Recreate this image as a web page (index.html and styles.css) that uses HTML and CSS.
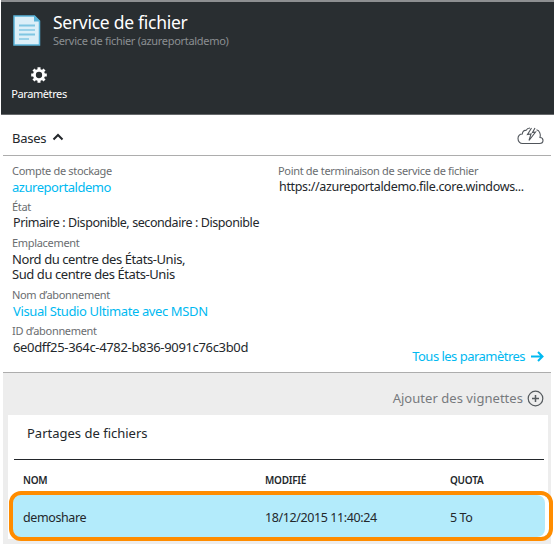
FILE: index.html
```html
<!DOCTYPE html>
<html lang="fr">
<head>
<meta charset="utf-8">
<title>Service de fichier</title>
<link rel="stylesheet" href="styles.css">
</head>
<body>
<main class="blade">
  <header class="header">
    <div class="heading">
      <svg class="doc" width="28" height="32" viewBox="0 0 28 32">
        <path d="M1 1H21.500L26.500 6V30H1Z" fill="#dceff8" stroke="#59b4d9" stroke-width="1.500"/>
        <path d="M21 .5L27 6.500H21Z" fill="#59b4d9"/>
        <path d="M6 10.500H22M6 19.500H22" stroke="#7fc6e2" stroke-width="2"/>
        <path d="M6 15H22M6 24H16" stroke="#59b4d9"/>
      </svg>
      <div>
        <h1 class="title"><span>Service de fichier</span></h1>
        <p class="subtitle"><span>Service de fichier (azureportaldemo)</span></p>
      </div>
    </div>
    <div class="command">
      <svg class="gear" width="16" height="16" viewBox="-8 -8 16 16">
        <circle r="4.600" fill="none" stroke="#fff" stroke-width="2.900"/>
        <path d="M0-7.800V-5M0 7.800V5M-7.800 0H-5M7.800 0H5M-5.500-5.500L-3.800-3.800M5.500 5.500L3.800 3.800M-5.500 5.500L-3.800 3.800M5.500-5.500L3.800-3.800" stroke="#fff" stroke-width="3"/>
      </svg>
      <span class="command-label">Paramètres</span>
    </div>
  </header>
  <section class="essentials">
    <div class="bar">
      <span class="bases">Bases</span>
      <svg class="chevron" width="12" height="8" viewBox="0 0 12 8"><path d="M1.500 6.500L6 2L10.500 6.500" fill="none" stroke="#23272b" stroke-width="2"/></svg>
      <svg class="cloud" width="27" height="18" viewBox="0 0 27 18" fill="none" stroke="#50555b" stroke-width="1.100">
        <path d="M9 3.500C6.500 3 5.500 5 5.300 7C2.500 7 1 9 1 11.500C1 14.500 3 16.500 5.500 16.500H22.500C24.800 16.500 26 15 26 13.500C26 12 25 10.500 23 10.500C24 7 22.500 3.500 19.500 2.800M9 3.500C10 1.500 11.500 1 13 1"/>
        <path d="M14.500 1L10.500 7.500L14 7L12 13.500L18.500 5L15.500 5.500L18 1"/>
      </svg>
    </div>
    <div class="details">
      <dl class="fields left">
        <dt>Compte de stockage</dt><dd class="account link">azureportaldemo</dd>
        <dt>État</dt><dd class="status">Primaire : Disponible, secondaire : Disponible</dd>
        <dt>Emplacement</dt><dd class="location"><div>Nord du centre des États-Unis,</div><div>Sud du centre des États-Unis</div></dd>
        <dt>Nom d’abonnement</dt><dd class="plan link">Visual Studio Ultimate avec MSDN</dd>
        <dt>ID d’abonnement</dt><dd class="plan-id">6e0dff25-364c-4782-b836-9091c76c3b0d</dd>
      </dl>
      <div class="right">
        <dl class="fields"><dt>Point de terminaison de service de fichier</dt><dd class="endpoint">https://azureportaldemo.file.core.windows...</dd></dl>
        <a class="all link"><span>Tous les paramètres</span>
          <svg width="13" height="11" viewBox="0 0 13 11"><path d="M0 5.500H11M7 1L11.500 5.500L7 10" fill="none" stroke="#00b9f1" stroke-width="2"/></svg>
        </a>
      </div>
    </div>
  </section>
  <section class="lens">
    <div class="add"><span>Ajouter des vignettes</span>
      <svg width="17" height="17" viewBox="0 0 17 17"><path d="M8.500 5V12M5 8.500H12" stroke="#555a5e" stroke-width="1.500"/><circle cx="8.500" cy="8.500" r="7.300" fill="none" stroke="#555a5e" stroke-width="1.200"/></svg>
    </div>
    <div class="tile">
      <h2 class="tile-title"><span>Partages de fichiers</span></h2>
      <div class="row head"><span>NOM</span><span>MODIFIÉ</span><span>QUOTA</span></div>
      <div class="row item"><span>demoshare</span><span>18/12/2015 11:40:24</span><span>5 To</span></div>
    </div>
  </section>
</main>
</body>
</html>
```
FILE: styles.css
```css
* { box-sizing: border-box; }
body { margin: 0; background: #fff; color: #23272b; font: 13px/16px "Noto Sans", sans-serif; overflow: hidden; }
h1, h2, p, dl, dd { margin: 0; font-weight: 400; }
svg { display: block; flex: none; }
.blade { width: 554px; height: 544px; }
.header { height: 115px; margin-left: 1px; background: #292e31; border-top: 2px solid #8d8f91; border-bottom: 1px solid #65686a; }
.heading { display: flex; height: 62px; padding: 13px 0 0 12px; }
.heading > div { margin: -6px 0 0 12px; }
.title { font-size: 17.5px; line-height: 26px; letter-spacing: -.28px; color: #fff; white-space: nowrap; }
.subtitle { font-size: 11px; line-height: 12px; letter-spacing: -.31px; color: #8b8f92; white-space: nowrap; }
.command { display: flex; flex-direction: column; align-items: center; width: 76px; padding-top: 3px; color: #fff; }
.command-label { font-size: 11px; line-height: 14px; letter-spacing: -.4px; margin-top: 4px; white-space: nowrap; }
.essentials { margin: 0 3px; border-bottom: 1px solid #adadad; height: 258px; }
.bar { display: flex; align-items: center; height: 41px; padding: 5px 7px 0 9px; border-bottom: 1px solid #adadad; }
.bases { letter-spacing: -.25px; }
.chevron { margin: -2px 0 0 6px; }
.cloud { margin-left: auto; margin-top: -3px; }
.details { display: flex; height: 216px; padding: 7px 3px 0 9px; }
.left { width: 266px; }
.fields { white-space: nowrap; }
dt { font-size: 11px; line-height: 16px; letter-spacing: -.32px; color: #6a6d70; }
dd { line-height: 16px; margin: 1px 0 3px; }
.account { margin: 0 0 4px; letter-spacing: -.46px; }
.status { margin: 0 0 4px 1px; font-size: 12.5px; letter-spacing: -.42px; }
.location { line-height: 15px; margin-bottom: 5px; letter-spacing: -.42px; }
.plan { margin: 0 0 4px 1px; letter-spacing: -.38px; }
.plan-id { margin: 0 0 0 1px; letter-spacing: -.34px; }
.endpoint { margin: 0 0 0 1px; font-size: 12.5px; letter-spacing: -.34px; }
.link { color: #00b9f1; }
.right { flex: 1; display: flex; flex-direction: column; justify-content: space-between; }
.all { display: flex; justify-content: flex-end; align-items: center; gap: 6px; padding: 0 4px 8px 0; letter-spacing: -.52px; white-space: nowrap; }
.lens { height: 171px; margin: 0 3px; padding: 16px 3px 0 5px; background: #ededed; }
.add { display: flex; justify-content: flex-end; align-items: center; gap: 4px; height: 18px; padding-right: 4px; color: #777a7d; letter-spacing: .04px; white-space: nowrap; }
.tile { height: 124px; margin-top: 8px; background: #fff; }
.tile-title { height: 45px; margin: 0 4px 0 6px; padding: 10px 13px 0; border-bottom: 1px solid #23272b; font-size: 13px; line-height: 16px; }
.row { display: grid; grid-template-columns: 242px 185px 1fr; align-items: center; white-space: nowrap; }
.head { height: 31px; padding: 8px 0 0 15px; font-size: 10px; line-height: 14px; font-weight: 600; letter-spacing: -.25px; }
.item { width: 544px; height: 50px; padding: 3px 0 0 10px; margin-left: 1px; border: 4px solid #ff8c00; border-radius: 12px; background: #b3ebfb; box-shadow: inset -4px 0 #fff; font-size: 12.5px; letter-spacing: -.4px; }
```
